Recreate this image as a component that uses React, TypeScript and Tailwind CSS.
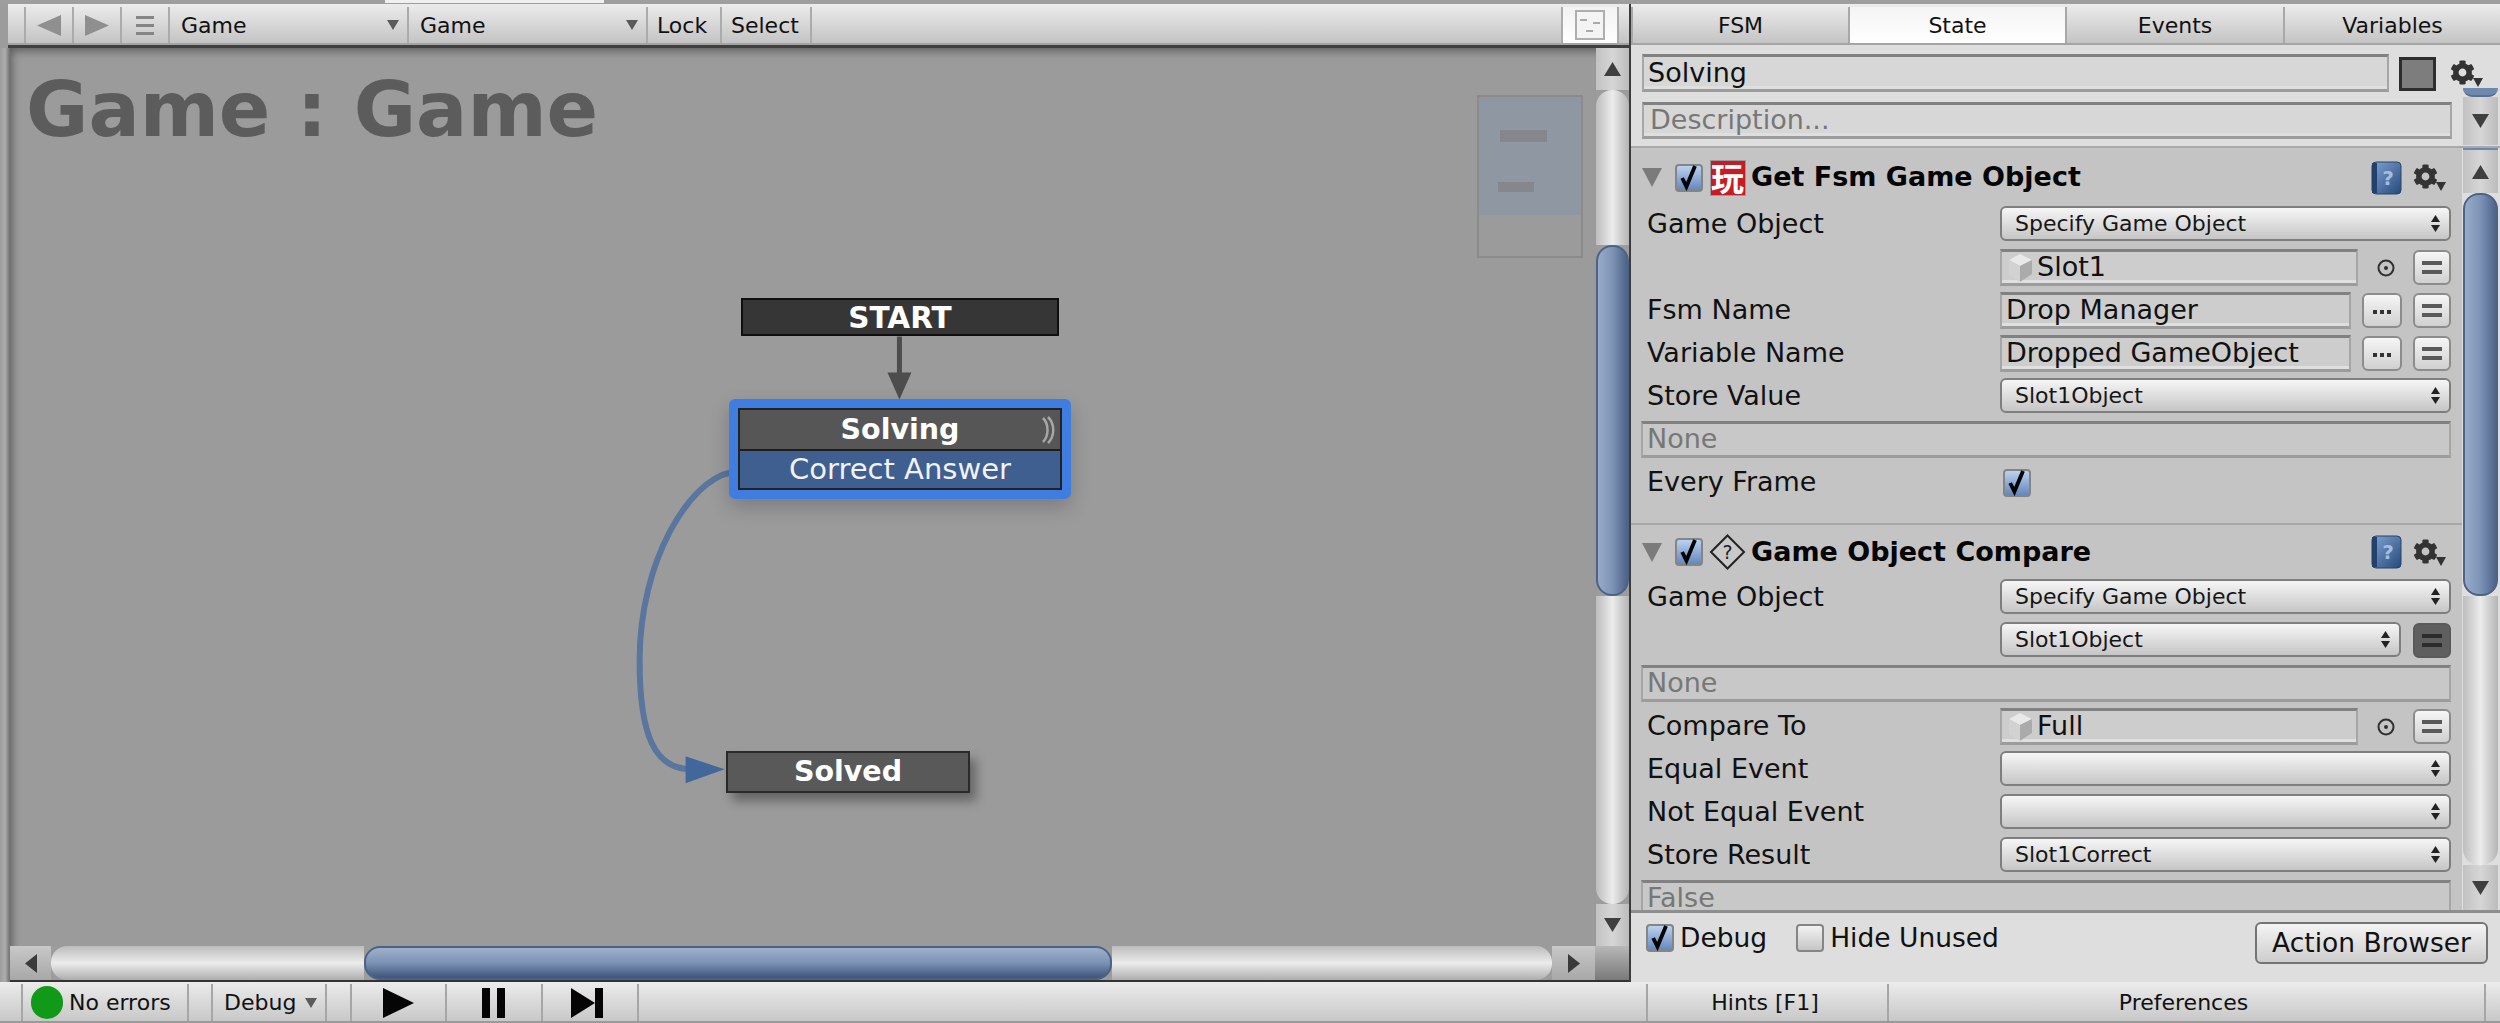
import React from "react";
import { FaCog } from "react-icons/fa";

const Tri = ({ dir, c = "#3c3c3c", w = 14, h = 12 }: { dir: "u" | "d" | "l" | "r"; c?: string; w?: number; h?: number }) => {
  const pts = { u: "0,10 5,0 10,10", d: "0,0 10,0 5,10", l: "10,0 10,10 0,5", r: "0,0 10,5 0,10" }[dir];
  return (
    <svg width={w} height={h} viewBox="0 0 10 10" preserveAspectRatio="none" className="block shrink-0">
      <polygon points={pts} fill={c} />
    </svg>
  );
};

const Gear = ({ className = "" }: { className?: string }) => (
  <div className={"relative w-[33px] h-[27px] shrink-0 " + className}>
    <FaCog className="text-[#333333] w-[25px] h-[25px]" />
    <div className="absolute right-0 bottom-0">
      <Tri dir="d" w={10} h={9} c="#333333" />
    </div>
  </div>
);

const Check = () => (
  <svg viewBox="0 0 28 28" className="w-full h-full block overflow-visible">
    <path d="M6 14 L11 24 L21 0" fill="none" stroke="#050505" strokeWidth="4.5" />
  </svg>
);

const CheckBox = ({ on = true, className = "" }: { on?: boolean; className?: string }) => (
  <div
    className={
      "w-[28px] h-[28px] shrink-0 rounded-[4px] border-2 border-[#858585] " +
      (on ? "bg-linear-to-b from-[#bcd2f0] to-[#6488bc] " : "bg-linear-to-b from-[#f2f2f2] to-[#c6c6c6] ") +
      className
    }
  >
    {on && <Check />}
  </div>
);

const Cube = () => (
  <svg width="28" height="32" viewBox="0 0 28 32" className="shrink-0">
    <polygon points="14,2 26,8 14,14 3,8" fill="#e9e9e9" />
    <polygon points="3,8 14,14 14,30 3,23" fill="#d2d2d2" />
    <polygon points="14,14 26,8 26,22 14,30" fill="#ababab" />
  </svg>
);

const Target = () => (
  <svg width="22" height="22" viewBox="0 0 22 22" className="shrink-0">
    <circle cx="11" cy="11" r="7.5" fill="none" stroke="#303030" strokeWidth="2" />
    <circle cx="11" cy="11" r="2" fill="#303030" />
  </svg>
);

const UpDown = () => (
  <div className="flex flex-col gap-[3px] shrink-0">
    <Tri dir="u" w={9} h={7} c="#222222" />
    <Tri dir="d" w={9} h={7} c="#222222" />
  </div>
);

const Dropdown = ({ text = "", className = "w-full" }: { text?: string; className?: string }) => (
  <div
    className={
      "h-[35px] mb-[2px] flex items-center justify-between pl-[13px] pr-[9px] rounded-[6px] border-2 border-[#7e7e7e] bg-linear-to-b from-[#f6f6f6] to-[#c6c6c6] text-[22px] text-[#161616] " +
      className
    }
  >
    <span>{text}</span>
    <UpDown />
  </div>
);

const EqBtn = ({ dark = false }: { dark?: boolean }) => (
  <div
    className={
      "w-[38px] h-[35px] shrink-0 flex flex-col items-center justify-center gap-[5px] rounded-[6px] border-2 " +
      (dark ? "bg-[#5f5f5f] border-[#5a5a5a]" : "bg-linear-to-b from-[#f6f6f6] to-[#d0d0d0] border-[#8c8c8c]")
    }
  >
    <div className={"w-[20px] h-[4px] " + (dark ? "bg-[#2c2c2c]" : "bg-[#5a5a5a]")} />
    <div className={"w-[20px] h-[4px] " + (dark ? "bg-[#2c2c2c]" : "bg-[#5a5a5a]")} />
  </div>
);

const DotsBtn = () => (
  <div className="w-[40px] h-[35px] shrink-0 flex items-center justify-center gap-[3px] pt-[3px] rounded-[6px] border-2 border-[#8c8c8c] bg-linear-to-b from-[#f6f6f6] to-[#d0d0d0]">
    <div className="w-[4px] h-[4px] bg-[#333333]" />
    <div className="w-[4px] h-[4px] bg-[#333333]" />
    <div className="w-[4px] h-[4px] bg-[#333333]" />
  </div>
);

const Field = ({
  children,
  className = "",
  muted = false,
}: {
  children?: React.ReactNode;
  className?: string;
  muted?: boolean;
}) => (
  <div
    className={
      "h-[37px] flex items-center gap-[3px] border-2 border-[#a6a6a6] border-t-[3px] border-t-[#818181] border-b-[3px] border-b-[#9c9c9c] shadow-[inset_0_-3px_0_#dfdfdf] bg-[#cdcdcd] px-[4px] text-[27px] overflow-hidden whitespace-nowrap " +
      (muted ? "text-[#777777] " : "text-[#111111] ") +
      className
    }
  >
    {children}
  </div>
);

const Row = ({ label, children }: { label?: string; children: React.ReactNode }) => (
  <div className="h-[43px] flex items-center pl-[11px] pr-[11px]">
    <div className="w-[358px] shrink-0 pl-[5px] text-[27px] text-[#111111] whitespace-nowrap">{label}</div>
    <div className="flex-1 flex items-center min-w-0">{children}</div>
  </div>
);

const FullRow = ({ children }: { children: React.ReactNode }) => (
  <div className="h-[43px] flex items-center pl-[10px] pr-[11px]">{children}</div>
);

const Book = () => (
  <svg width="31" height="34" viewBox="0 0 31 34" className="shrink-0">
    <defs>
      <linearGradient id="bk" x1="0" y1="0" x2="1" y2="1">
        <stop offset="0" stopColor="#7da4d4" />
        <stop offset="1" stopColor="#27497c" />
      </linearGradient>
    </defs>
    <rect x="1" y="1" width="29" height="32" rx="4" fill="url(#bk)" stroke="#2a4468" />
    <rect x="1" y="2" width="5" height="30" fill="#24406c" />
    <text x="17" y="24" fontSize="20" fontWeight="700" textAnchor="middle" fill="#a5bedd" fontFamily="DejaVu Sans">
      ?
    </text>
  </svg>
);

const ActionHeader = ({ title, icon, className }: { title: string; icon: React.ReactNode; className: string }) => (
  <div className={"flex items-center pl-[11px] pr-[16px] " + className}>
    <div className="mr-[13px]">
      <Tri dir="d" w={20} h={19} c="#7b7b7b" />
    </div>
    <CheckBox className="mr-[6px]" />
    <div className="w-[37px] shrink-0 flex justify-center mr-[5px]">{icon}</div>
    <div className="flex-1 text-[27px] font-bold text-[#050505] whitespace-nowrap">{title}</div>
    <Book />
    <Gear className="ml-[11px]" />
  </div>
);

const VThumb = ({ className }: { className: string }) => (
  <div className={"shrink-0 rounded-[16px] border-2 border-[#4d6386] bg-linear-to-r from-[#98abc8] via-[#7d93b6] to-[#4d6488] " + className} />
);

const VTrack = ({ className }: { className: string }) => (
  <div className={"shrink-0 bg-linear-to-r from-[#bdbdbd] via-[#ececec] to-[#b4b4b4] " + className} />
);

const ArrowBtn = ({ dir, className }: { dir: "u" | "d"; className: string }) => (
  <div className={"shrink-0 flex items-center justify-center bg-linear-to-r from-[#c2c2c2] via-[#d6d6d6] to-[#bcbcbc] " + className}>
    <Tri dir={dir} w={17} h={14} c="#3f3f3f" />
  </div>
);

const ToolCell = ({ className, children }: { className: string; children?: React.ReactNode }) => (
  <div className={"h-full shrink-0 flex items-center border-l-2 border-[#ababab] " + className}>{children}</div>
);

const SmallArrow = () => <Tri dir="d" w={12} h={10} c="#5b5b5b" />;

const GameSelect = () => (
  <ToolCell className="w-[239px] justify-between pl-[11px] pr-[8px]">
    <span>Game</span>
    <SmallArrow />
  </ToolCell>
);

const Toolbar = () => (
  <div className="h-[41px] pt-[3px] flex text-[22px] text-[#111111] bg-linear-to-b from-[#ececec] to-[#c4c4c4] border-b-2 border-[#a4a4a4] ml-[8px]">
    <div className="w-[16px] shrink-0" />
    <ToolCell className="w-[48px] justify-center">
      <Tri dir="l" w={24} h={21} c="#8f8f8f" />
    </ToolCell>
    <ToolCell className="w-[48px] justify-center">
      <Tri dir="r" w={24} h={21} c="#8f8f8f" />
    </ToolCell>
    <ToolCell className="w-[48px] justify-center">
      <div className="flex flex-col gap-[5px]">
        <div className="w-[18px] h-[3px] bg-[#858585]" />
        <div className="w-[18px] h-[3px] bg-[#858585]" />
        <div className="w-[18px] h-[3px] bg-[#858585]" />
      </div>
    </ToolCell>
    <GameSelect />
    <GameSelect />
    <ToolCell className="w-[74px] pl-[9px]">Lock</ToolCell>
    <ToolCell className="w-[90px] pl-[9px]">Select</ToolCell>
    <ToolCell className="flex-1" />
    <ToolCell className="w-[56px] justify-center bg-linear-to-b from-[#f2f2f2] to-[#ffffff]">
      <svg width="30" height="30" viewBox="0 0 30 30">
        <rect x="1" y="1" width="28" height="28" fill="#f4f4f4" stroke="#aeaeae" strokeWidth="2" />
        <rect x="5" y="9" width="7" height="2" fill="#aaaaaa" />
        <rect x="18" y="12" width="7" height="2" fill="#aaaaaa" />
        <rect x="11" y="20" width="7" height="2" fill="#aaaaaa" />
      </svg>
    </ToolCell>
    <ToolCell className="w-[12px]" />
  </div>
);

const Canvas = () => (
  <div className="relative flex-1 bg-[#9b9b9b] shadow-[inset_5px_6px_8px_-3px_rgba(0,0,0,0.4)] overflow-hidden">
    <div className="pl-[16px] pt-[18px] text-[76px] leading-[88px] font-bold text-[#5c5c5c] whitespace-nowrap">Game : Game</div>

    <svg className="absolute inset-0 w-full h-full" viewBox="10 48 1587 897" fill="none">
      <line x1="900" y1="336" x2="900" y2="375" stroke="#4d4d4d" strokeWidth="5" />
      <polygon points="888,372 912,372 900,399" fill="#4d4d4d" />
      <path
        d="M 731 472 C 690 480 640 560 640 660 C 640 735 655 769 692 769"
        stroke="#4a6d9f"
        strokeWidth="6"
        opacity="0.8"
        className="blur-[0.7px]"
      />
      <polygon points="686,756 725,769 686,783" fill="#42679b" />
    </svg>

    <div className="absolute left-[1467px] top-[47px] w-[106px] h-[163px] border-2 border-[#8b8b8b]">
      <div className="h-[118px] bg-[#8f97a2] relative">
        <div className="absolute left-[21px] top-[33px] w-[47px] h-[12px] bg-[#85878d]" />
        <div className="absolute left-[19px] top-[85px] w-[36px] h-[10px] bg-[#85878d]" />
      </div>
    </div>

    <div className="absolute left-[731px] top-[250px] w-[318px] h-[38px] leading-[30px] pt-[1px] flex items-center justify-center border-2 border-[#0f0f0f] bg-[#363636] text-white font-bold text-[29.5px]">
      START
    </div>

    <div className="absolute left-[719px] top-[351px] w-[342px] h-[100px] rounded-[6px] border-[9px] border-[#3f7ee0] shadow-[0_8px_20px_rgba(0,0,0,0.2)]">
      <div className="w-full h-full border-2 border-[#222222] flex flex-col">
        <div className="relative h-[41px] shrink-0 leading-[30px] pt-[1px] flex items-center justify-center bg-[#565656] text-white font-bold text-[28.5px] border-b-2 border-[#1d1d1d]">
          Solving
          <svg className="absolute right-[3px] top-[6px]" width="16" height="28" viewBox="0 0 16 28" fill="none" stroke="#a6a6a6" strokeWidth="2.5">
            <path d="M2 2 C8 8 8 20 2 26" />
            <path d="M7 1 C14 8 14 20 7 27" />
          </svg>
        </div>
        <div className="h-[37px] shrink-0 leading-[30px] pb-[2px] flex items-center justify-center bg-[#3e5f90] text-[#f2f2f2] text-[29px]">Correct Answer</div>
      </div>
    </div>

    <div className="absolute left-[716px] top-[703px] w-[244px] h-[42px] flex items-center justify-center border-2 border-[#2a2a2a] bg-[#595959] text-white font-bold text-[28.5px] shadow-[6px_8px_10px_rgba(0,0,0,0.35)]">
      Solved
    </div>
  </div>
);

const LeftColumn = () => (
  <div className="w-[1631px] shrink-0 flex flex-col bg-[#9c9c9c] border-r-2 border-[#3c3c3c]">
    <Toolbar />
    <div className="h-[3px] bg-[#3f3f3f] ml-[8px]" />
    <div className="flex-1 flex min-h-0">
      <div className="w-[10px] shrink-0 bg-linear-to-r from-[#9d9d9d] via-[#adadad] to-[#6f6f6f]" />
      <div className="flex-1 flex flex-col min-w-0">
        <div className="flex-1 flex min-h-0">
          <Canvas />
          <div className="w-[33px] shrink-0 flex flex-col">
            <ArrowBtn dir="u" className="h-[42px]" />
            <VTrack className="h-[155px] rounded-t-[16px]" />
            <VThumb className="h-[351px]" />
            <VTrack className="flex-1 rounded-b-[16px]" />
            <ArrowBtn dir="d" className="h-[42px]" />
          </div>
        </div>
        <div className="h-[36px] shrink-0 flex border-b-2 border-[#333333]">
          <div className="w-[41px] shrink-0 flex items-center justify-center bg-linear-to-b from-[#c8c8c8] to-[#a8a8a8]">
            <Tri dir="l" w={12} h={19} c="#3a3a3a" />
          </div>
          <div className="w-[313px] shrink-0 rounded-l-[16px] bg-linear-to-b from-[#bcbcbc] via-[#ececec] to-[#aeaeae]" />
          <div className="w-[748px] shrink-0 rounded-[16px] border-2 border-[#4d6386] bg-linear-to-b from-[#9fb0ca] via-[#7c92b5] to-[#3f5478]" />
          <div className="flex-1 rounded-r-[16px] bg-linear-to-b from-[#bcbcbc] via-[#ececec] to-[#aeaeae]" />
          <div className="w-[43px] shrink-0 flex items-center justify-center bg-linear-to-b from-[#c8c8c8] to-[#a8a8a8]">
            <Tri dir="r" w={12} h={19} c="#3a3a3a" />
          </div>
          <div className="w-[34px] shrink-0 bg-linear-to-b from-[#b8b8b8] to-[#7a7a7a]" />
        </div>
      </div>
    </div>
  </div>
);

const Tab = ({ label, active = false, className }: { label: string; active?: boolean; className: string }) => (
  <div
    className={
      "h-full flex items-center justify-center border-l-2 border-[#a8a8a8] " +
      (active ? "bg-linear-to-b from-[#f4f4f4] to-[#ffffff] " : "") +
      className
    }
  >
    {label}
  </div>
);

const RightColumn = () => (
  <div className="flex-1 min-w-0 flex flex-col bg-[#dedede]">
    <div className="h-[41px] pt-[3px] flex text-[22px] text-[#111111] bg-linear-to-b from-[#ececec] to-[#c4c4c4] border-b-2 border-[#a4a4a4]">
      <Tab label="FSM" className="w-[217px]" />
      <Tab label="State" active className="w-[217px]" />
      <Tab label="Events" className="w-[218px]" />
      <Tab label="Variables" className="flex-1" />
    </div>

    <div className="h-[103px] shrink-0 pt-[9px] pl-[11px] border-b-2 border-[#a9a9a9]">
      <div className="h-[38px] flex items-center">
        <Field className="w-[747px] !h-[38px] !bg-[#d7d7d7]">Solving</Field>
        <div className="w-[37px] h-[34px] ml-[10px] mt-[2px] shrink-0 border-[3px] border-[#2d2d2d] bg-[#7d7d7d]" />
        <Gear className="ml-[14px]" />
      </div>
      <div className="flex">
        <Field muted className="w-[810px] mt-[10px] !bg-[#d7d7d7]">
          <span className="pl-[2px]">Description...</span>
        </Field>
        <div className="w-[35px] h-[57px] -mt-[4px] ml-[11px] flex flex-col shrink-0">
          <div className="h-[9px] bg-[#6f88ae] rounded-b-[10px] border-b-2 border-[#5a6f92]" />
          <ArrowBtn dir="d" className="flex-1" />
        </div>
      </div>
    </div>

    <div className="h-[762px] shrink-0 flex">
      <div className="w-[831px] shrink-0 h-full bg-[#c4c4c4] overflow-hidden">
        <ActionHeader
          title="Get Fsm Game Object"
          className="h-[55px] pt-[4px]"
          icon={
            <div className="w-[36px] h-[36px] flex items-center justify-center bg-[#c81c24] border border-[#999999] text-white text-[33px] leading-none font-bold font-['Noto_Sans_CJK_SC',sans-serif]">
              玩
            </div>
          }
        />
        <Row label="Game Object">
          <Dropdown text="Specify Game Object" />
        </Row>
        <Row>
          <Field className="w-[358px]">
            <Cube />
            Slot1
          </Field>
          <div className="flex-1 flex justify-center">
            <Target />
          </div>
          <EqBtn />
        </Row>
        <Row label="Fsm Name">
          <Field className="w-[351px]">Drop Manager</Field>
          <div className="flex-1 flex justify-center">
            <DotsBtn />
          </div>
          <EqBtn />
        </Row>
        <Row label="Variable Name">
          <Field className="w-[351px]">Dropped GameObject</Field>
          <div className="flex-1 flex justify-center">
            <DotsBtn />
          </div>
          <EqBtn />
        </Row>
        <Row label="Store Value">
          <Dropdown text="Slot1Object" />
        </Row>
        <FullRow>
          <Field muted className="w-full !bg-[#c8c8c8] !shadow-none">
            None
          </Field>
        </FullRow>
        <Row label="Every Frame">
          <CheckBox className="ml-[3px]" />
        </Row>

        <div className="h-[19px]" />
        <div className="border-t-2 border-[#a8a8a8]">
          <ActionHeader
            title="Game Object Compare"
            className="h-[51px] pt-[3px]"
            icon={
              <svg width="37" height="36" viewBox="0 0 37 36" fill="none">
                <polygon points="18.5,1.5 35,18 18.5,34.5 2,18" stroke="#222222" strokeWidth="2" fill="#c9c9c9" />
                <text x="18.5" y="25" fontSize="19" textAnchor="middle" fill="#222222" fontFamily="DejaVu Sans">
                  ?
                </text>
              </svg>
            }
          />
          <Row label="Game Object">
            <Dropdown text="Specify Game Object" />
          </Row>
          <Row>
            <Dropdown text="Slot1Object" className="w-[401px] mr-[12px]" />
            <EqBtn dark />
          </Row>
          <FullRow>
            <Field muted className="w-full !bg-[#c8c8c8] !shadow-none">
              None
            </Field>
          </FullRow>
          <Row label="Compare To">
            <Field className="w-[358px]">
              <Cube />
              Full
            </Field>
            <div className="flex-1 flex justify-center">
              <Target />
            </div>
            <EqBtn />
          </Row>
          <Row label="Equal Event">
            <Dropdown />
          </Row>
          <Row label="Not Equal Event">
            <Dropdown />
          </Row>
          <Row label="Store Result">
            <Dropdown text="Slot1Correct" />
          </Row>
          <FullRow>
            <Field muted className="w-full !bg-[#c8c8c8] !shadow-none">
              False
            </Field>
          </FullRow>
        </div>
      </div>
      <div className="w-[35px] ml-[1px] shrink-0 h-full flex flex-col">
        <div className="h-[2px] bg-[#6f88ae]" />
        <ArrowBtn dir="u" className="h-[43px]" />
        <VThumb className="h-[403px]" />
        <VTrack className="flex-1 rounded-b-[16px]" />
        <ArrowBtn dir="d" className="h-[45px]" />
      </div>
    </div>

    <div className="h-[72px] shrink-0 flex items-start border-t-[3px] border-[#8e8e8e] pl-[15px] pr-[12px] text-[26.5px] text-[#111111]">
      <div className="flex items-center mt-[5px]">
        <CheckBox />
        <span className="ml-[6px]">Debug</span>
        <CheckBox on={false} className="ml-[29px]" />
        <span className="ml-[6px]">Hide Unused</span>
      </div>
      <div className="ml-auto mt-[9px] w-[233px] h-[42px] flex items-center justify-center rounded-[6px] border-2 border-[#747474] bg-linear-to-b from-[#f4f4f4] to-[#cdcdcd]">
        Action Browser
      </div>
    </div>
  </div>
);

const StatusCell = ({ className, children }: { className: string; children?: React.ReactNode }) => (
  <div className={"h-full shrink-0 flex items-center border-l-2 border-[#a6a6a6] " + className}>{children}</div>
);

const StatusBar = () => (
  <div className="h-[41px] shrink-0 pt-[2px] flex text-[22px] text-[#111111] bg-linear-to-b from-[#ececec] to-[#c8c8c8] border-b-2 border-[#9a9a9a]">
    <div className="w-[21px] shrink-0" />
    <StatusCell className="w-[166px] pl-[8px] gap-[6px]">
      <div className="w-[32px] h-[33px] shrink-0 rounded-full bg-[#109a17]" />
      No errors
    </StatusCell>
    <StatusCell className="w-[24px]" />
    <StatusCell className="w-[114px] pl-[11px] gap-[9px]">
      Debug
      <SmallArrow />
    </StatusCell>
    <StatusCell className="w-[25px]" />
    <StatusCell className="w-[95px] pl-[31px]">
      <Tri dir="r" w={31} h={30} c="#050505" />
    </StatusCell>
    <StatusCell className="w-[96px] justify-center gap-[7px] pr-[2px]">
      <div className="w-[8px] h-[30px] bg-[#050505]" />
      <div className="w-[8px] h-[30px] bg-[#050505]" />
    </StatusCell>
    <StatusCell className="w-[96px] pl-[28px]">
      <Tri dir="r" w={24} h={30} c="#050505" />
      <div className="w-[8px] h-[30px] bg-[#050505]" />
    </StatusCell>
    <StatusCell className="flex-1" />
    <StatusCell className="w-[241px] justify-center pr-[5px]">Hints [F1]</StatusCell>
    <StatusCell className="w-[597px] justify-center pr-[6px]">Preferences</StatusCell>
    <StatusCell className="w-[16px]" />
  </div>
);

export default function App() {
  return (
    <div className="w-[2500px] h-[1023px] overflow-hidden flex flex-col bg-[#9c9c9c] font-['DejaVu_Sans','Noto_Sans_CJK_SC',sans-serif]">
      <div className="h-[4px] shrink-0 bg-[#9e9e9e]">
        <div className="ml-[385px] w-[219px] h-[3px] bg-[#f0f0f0]" />
      </div>
      <div className="h-[978px] shrink-0 flex">
        <LeftColumn />
        <RightColumn />
      </div>
      <StatusBar />
    </div>
  );
}
